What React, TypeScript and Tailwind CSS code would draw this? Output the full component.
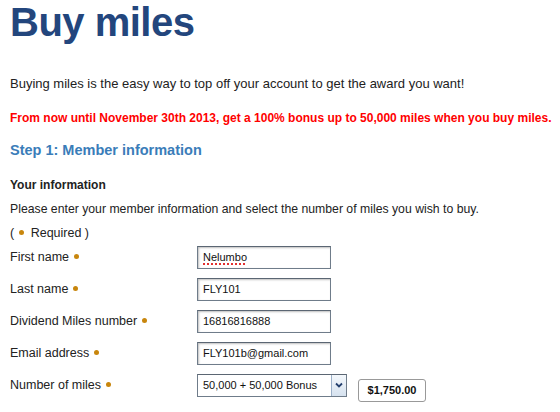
function Dot() {
  return <span className="inline-block w-[5px] h-[5px] rounded-full bg-[#c8860d] align-middle ml-[5px] mb-[2px]" />
}

interface FieldRowProps {
  label: string
  children: React.ReactNode
}

function FieldRow({ label, children }: FieldRowProps) {
  return (
    <div className="flex items-center h-[32px]">
      <div className="w-[187px] shrink-0">
        {label}
        <Dot />
      </div>
      {children}
    </div>
  )
}

function TextBox({ value, spell = false }: { value: string; spell?: boolean }) {
  return (
    <div className="w-[134px] h-[23px] border border-[#6f7c8a] border-t-[#5b6673] shadow-[inset_1px_1px_2px_rgba(0,0,0,0.25)] bg-white flex items-center px-[5px] text-[11px] text-[#111]">
      <span className={spell ? "underline decoration-dotted decoration-[#e23030] decoration-2 underline-offset-2" : ""}>{value}</span>
    </div>
  )
}

export default function App() {
  return (
    <div className="w-[560px] h-[412px] overflow-hidden bg-white px-[10px] text-[#222] text-[12.5px] leading-[16px]" style={{ fontFamily: '"Liberation Sans", Arial, sans-serif' }}>
      <h1 className="h-[44px] leading-[44px] text-[40px] font-bold text-[#23467d] tracking-[-0.5px]">Buy miles</h1>

      <p className="mt-[32px] text-[13px]">Buying miles is the easy way to top off your account to get the award you want!</p>

      <p className="mt-[18px] text-[12px] font-bold text-[#ff0000] whitespace-nowrap">
        From now until November 30th 2013, get a 100% bonus up to 50,000 miles when you buy miles.
      </p>

      <h2 className="mt-[14px] text-[14.5px] leading-[20px] font-bold text-[#3a7db9]">Step 1: Member information</h2>

      <h3 className="mt-[17px] text-[12px] font-bold">Your information</h3>

      <p className="mt-[8px] text-[12.25px]">Please enter your member information and select the number of miles you wish to buy.</p>

      <p className="mt-[8px]">
        (<Dot /> <span className="ml-[3px]">Required )</span>
      </p>

      <div>
        <FieldRow label="First name">
          <TextBox value="Nelumbo" spell />
        </FieldRow>
        <FieldRow label="Last name">
          <TextBox value="FLY101" />
        </FieldRow>
        <FieldRow label="Dividend Miles number">
          <TextBox value="16816816888" />
        </FieldRow>
        <FieldRow label="Email address">
          <TextBox value="FLY101b@gmail.com" />
        </FieldRow>
        <FieldRow label="Number of miles">
          <div className="flex items-center">
            <div className="w-[150px] h-[23px] border border-[#6f7c8a] border-t-[#5b6673] bg-white flex items-center text-[11px] text-[#111]">
              <span className="flex-1 px-[5px]">50,000 + 50,000 Bonus</span>
              <span className="w-[15px] h-full border-l border-[#9bb0c8] bg-gradient-to-b from-[#f4f8fc] to-[#d6e2ef] flex items-center justify-center">
                <svg width="8" height="6" viewBox="0 0 8 6">
                  <path d="M1 1.5 L4 4.5 L7 1.5" fill="none" stroke="#24406e" strokeWidth="1.8" />
                </svg>
              </span>
            </div>
            <div className="ml-[11px] mt-[10px] w-[68px] h-[23px] rounded-[3px] border border-[#999] bg-white flex items-center justify-center text-[11px] font-bold text-[#111]">
              $1,750.00
            </div>
          </div>
        </FieldRow>
      </div>
    </div>
  )
}
